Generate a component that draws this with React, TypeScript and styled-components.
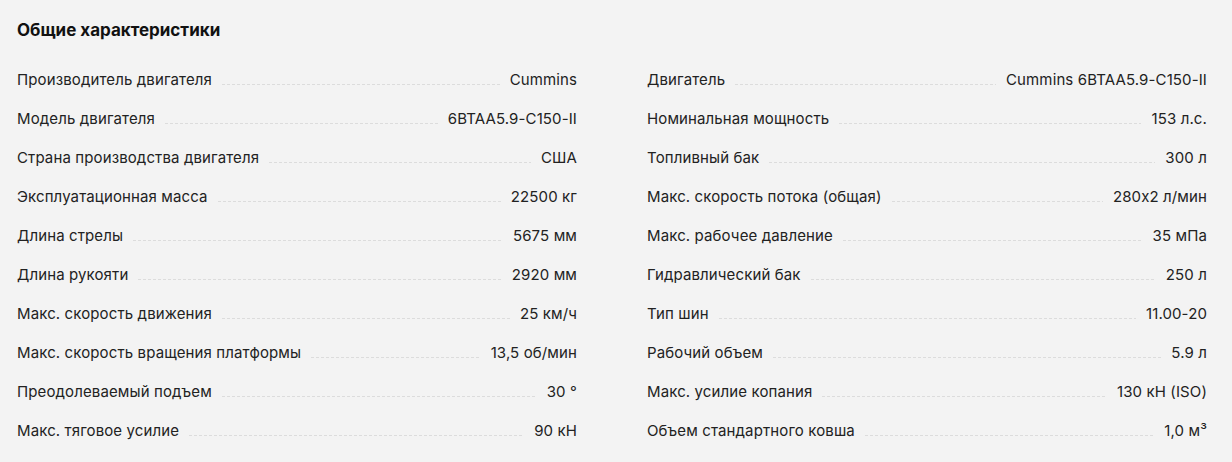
import React from "react";
import styled, { createGlobalStyle } from "styled-components";

const GlobalStyle = createGlobalStyle`
  html, body {
    margin: 0;
    padding: 0;
    background: #f3f3f3;
  }
  body {
    font-family: Inter, "Noto Sans", sans-serif;
    font-feature-settings: "calt" 0;
    color: #1b1b1b;
  }
`;

const Section = styled.section`
  width: 1232px;
  height: 462px;
  box-sizing: border-box;
  padding: 20px 25px 0 17px;
  background: #f3f3f3;
`;

const Title = styled.h2`
  margin: 0 0 20px;
  font-size: 17px;
  font-weight: 700;
  line-height: 20px;
  color: #111;
`;

const Columns = styled.div`
  display: grid;
  grid-template-columns: 1fr 1fr;
  column-gap: 70px;
`;

const List = styled.ul`
  list-style: none;
  margin: 0;
  padding: 0;
`;

const Row = styled.li`
  display: flex;
  align-items: baseline;
  height: 39px;
  line-height: 39px;
  font-size: 15px;
  letter-spacing: 0.12px;
`;

const Label = styled.span`
  flex: none;
  color: #222;
`;

const Filler = styled.span`
  flex: 1;
  height: 1px;
  margin: 0 10px;
  background-image: repeating-linear-gradient(
    to right,
    #dcdcdc 0 3px,
    transparent 3px 5px
  );
`;

const Value = styled.span`
  flex: none;
  color: #222;
`;

type Spec = [string, string];

const left: Spec[] = [
  ["Производитель двигателя", "Cummins"],
  ["Модель двигателя", "6BTAA5.9-C150-II"],
  ["Страна производства двигателя", "США"],
  ["Эксплуатационная масса", "22500 кг"],
  ["Длина стрелы", "5675 мм"],
  ["Длина рукояти", "2920 мм"],
  ["Макс. скорость движения", "25 км/ч"],
  ["Макс. скорость вращения платформы", "13,5 об/мин"],
  ["Преодолеваемый подъем", "30 °"],
  ["Макс. тяговое усилие", "90 кН"],
];

const right: Spec[] = [
  ["Двигатель", "Cummins 6BTAA5.9-C150-II"],
  ["Номинальная мощность", "153 л.с."],
  ["Топливный бак", "300 л"],
  ["Макс. скорость потока (общая)", "280x2 л/мин"],
  ["Макс. рабочее давление", "35 мПа"],
  ["Гидравлический бак", "250 л"],
  ["Тип шин", "11.00-20"],
  ["Рабочий объем", "5.9 л"],
  ["Макс. усилие копания", "130 кН (ISO)"],
  ["Объем стандартного ковша", "1,0 м³"],
];

function SpecList({ items }: { items: Spec[] }) {
  return (
    <List>
      {items.map(([label, value]) => (
        <Row key={label}>
          <Label>{label}</Label>
          <Filler />
          <Value>{value}</Value>
        </Row>
      ))}
    </List>
  );
}

export default function App() {
  return (
    <>
      <GlobalStyle />
      <Section>
        <Title>Общие характеристики</Title>
        <Columns>
          <SpecList items={left} />
          <SpecList items={right} />
        </Columns>
      </Section>
    </>
  );
}
